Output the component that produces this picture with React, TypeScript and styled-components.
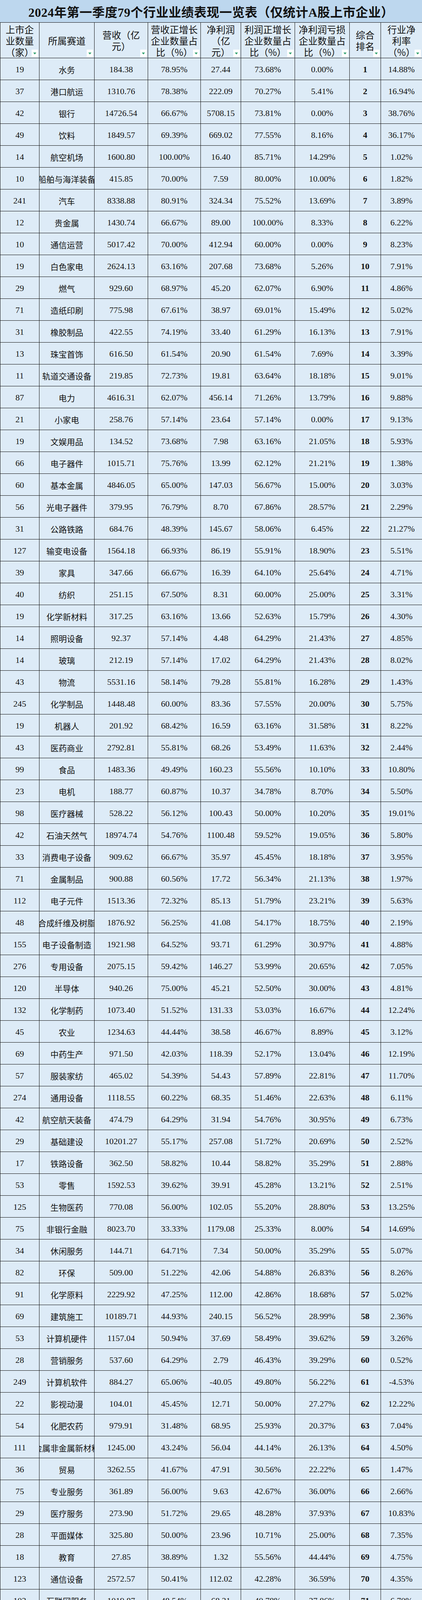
import React from "react";
import styled, { createGlobalStyle } from "styled-components";

const GlobalStyle = createGlobalStyle`
  html, body { margin: 0; padding: 0; background: #ffffff; overflow-x: hidden; }
  body { font-family: "Liberation Serif", "Noto Sans CJK SC", serif; }
  * { box-sizing: border-box; }
`;

const COLS = "101px 141px 137px 135px 103px 138px 140px 80px 105px";

const Page = styled.div`
  width: 1080px;
  height: 4574px;
  display: flex;
  flex-direction: column;
  overflow: hidden;
  background: #ddebf7;
`;

const TitleBar = styled.div`
  height: 57px;
  flex-shrink: 0;
  background: #bdd7ee;
  display: flex;
  align-items: center;
  justify-content: center;
  font-family: "Liberation Serif", "Noto Sans CJK SC", serif;
  font-size: 32px;
  font-weight: 700;
  color: #111;
  letter-spacing: 0.5px;
`;

const HeaderRow = styled.div`
  display: grid;
  grid-template-columns: ${COLS};
  flex-shrink: 0;
  height: 92px;
  border-top: 1.5px solid #111;
  border-bottom: 1.5px solid #111;
  background: #ddebf7;
`;

const HeaderCell = styled.div`
  position: relative;
  border-right: 1px solid #111;
  display: flex;
  flex-direction: column;
  align-items: center;
  justify-content: center;
  font-family: "Noto Sans CJK SC", sans-serif;
  font-size: 24px;
  line-height: 29px;
  color: #111;
  overflow: hidden;
  white-space: nowrap;
  &:first-child { border-left: 1px solid #111; }
  &:last-child { border-right: none; }
`;

const FilterButton = styled.span`
  position: absolute;
  right: 3px;
  bottom: 2px;
  width: 16px;
  height: 19px;
  background: #ffffff;
  display: flex;
  align-items: center;
  justify-content: center;
`;

const Row = styled.div`
  display: grid;
  grid-template-columns: ${COLS};
  flex-shrink: 0;
  height: 56px;
  border-bottom: 1px solid #111;
  background: #ddebf7;
`;

const Cell = styled.div<{ $bold?: boolean; $name?: boolean }>`
  border-right: 1px solid #111;
  display: flex;
  flex-direction: column;
  align-items: center;
  justify-content: center;
  overflow: hidden;
  white-space: nowrap;
  padding-top: 3px;
  color: #111;
  font-family: ${(p) =>
    p.$name
      ? `"Noto Sans CJK SC", sans-serif`
      : `"Liberation Serif", "Noto Sans CJK SC", serif`};
  font-size: ${(p) => (p.$name ? "21px" : "22px")};
  line-height: ${(p) => (p.$name ? "26px" : "24px")};
  font-weight: ${(p) => (p.$bold ? 700 : 400)};
  &:first-child { border-left: 1px solid #111; }
  &:last-child { border-right: none; }
`;

const NameLine = styled.span`
  display: block;
  flex-shrink: 0;
`;

type RowData = [number, string, string, string, string, string, string, number, string];

const DATA: RowData[] = [
  [19, "水务", "184.38", "78.95%", "27.44", "73.68%", "0.00%", 1, "14.88%"],
  [37, "港口航运", "1310.76", "78.38%", "222.09", "70.27%", "5.41%", 2, "16.94%"],
  [42, "银行", "14726.54", "66.67%", "5708.15", "73.81%", "0.00%", 3, "38.76%"],
  [49, "饮料", "1849.57", "69.39%", "669.02", "77.55%", "8.16%", 4, "36.17%"],
  [14, "航空机场", "1600.80", "100.00%", "16.40", "85.71%", "14.29%", 5, "1.02%"],
  [10, "船舶与海洋装备", "415.85", "70.00%", "7.59", "80.00%", "10.00%", 6, "1.82%"],
  [241, "汽车", "8338.88", "80.91%", "324.34", "75.52%", "13.69%", 7, "3.89%"],
  [12, "贵金属", "1430.74", "66.67%", "89.00", "100.00%", "8.33%", 8, "6.22%"],
  [10, "通信运营", "5017.42", "70.00%", "412.94", "60.00%", "0.00%", 9, "8.23%"],
  [19, "白色家电", "2624.13", "63.16%", "207.68", "73.68%", "5.26%", 10, "7.91%"],
  [29, "燃气", "929.60", "68.97%", "45.20", "62.07%", "6.90%", 11, "4.86%"],
  [71, "造纸印刷", "775.98", "67.61%", "38.97", "69.01%", "15.49%", 12, "5.02%"],
  [31, "橡胶制品", "422.55", "74.19%", "33.40", "61.29%", "16.13%", 13, "7.91%"],
  [13, "珠宝首饰", "616.50", "61.54%", "20.90", "61.54%", "7.69%", 14, "3.39%"],
  [11, "轨道交通设备", "219.85", "72.73%", "19.81", "63.64%", "18.18%", 15, "9.01%"],
  [87, "电力", "4616.31", "62.07%", "456.14", "71.26%", "13.79%", 16, "9.88%"],
  [21, "小家电", "258.76", "57.14%", "23.64", "57.14%", "0.00%", 17, "9.13%"],
  [19, "文娱用品", "134.52", "73.68%", "7.98", "63.16%", "21.05%", 18, "5.93%"],
  [66, "电子器件", "1015.71", "75.76%", "13.99", "62.12%", "21.21%", 19, "1.38%"],
  [60, "基本金属", "4846.05", "65.00%", "147.03", "56.67%", "15.00%", 20, "3.03%"],
  [56, "光电子器件", "379.95", "76.79%", "8.70", "67.86%", "28.57%", 21, "2.29%"],
  [31, "公路铁路", "684.76", "48.39%", "145.67", "58.06%", "6.45%", 22, "21.27%"],
  [127, "输变电设备", "1564.18", "66.93%", "86.19", "55.91%", "18.90%", 23, "5.51%"],
  [39, "家具", "347.66", "66.67%", "16.39", "64.10%", "25.64%", 24, "4.71%"],
  [40, "纺织", "251.15", "67.50%", "8.31", "60.00%", "25.00%", 25, "3.31%"],
  [19, "化学新材料", "317.25", "63.16%", "13.66", "52.63%", "15.79%", 26, "4.30%"],
  [14, "照明设备", "92.37", "57.14%", "4.48", "64.29%", "21.43%", 27, "4.85%"],
  [14, "玻璃", "212.19", "57.14%", "17.02", "64.29%", "21.43%", 28, "8.02%"],
  [43, "物流", "5531.16", "58.14%", "79.28", "55.81%", "16.28%", 29, "1.43%"],
  [245, "化学制品", "1448.48", "60.00%", "83.36", "57.55%", "20.00%", 30, "5.75%"],
  [19, "机器人", "201.92", "68.42%", "16.59", "63.16%", "31.58%", 31, "8.22%"],
  [43, "医药商业", "2792.81", "55.81%", "68.26", "53.49%", "11.63%", 32, "2.44%"],
  [99, "食品", "1483.36", "49.49%", "160.23", "55.56%", "10.10%", 33, "10.80%"],
  [23, "电机", "188.77", "60.87%", "10.37", "34.78%", "8.70%", 34, "5.50%"],
  [98, "医疗器械", "528.22", "56.12%", "100.43", "50.00%", "10.20%", 35, "19.01%"],
  [42, "石油天然气", "18974.74", "54.76%", "1100.48", "59.52%", "19.05%", 36, "5.80%"],
  [33, "消费电子设备", "909.62", "66.67%", "35.97", "45.45%", "18.18%", 37, "3.95%"],
  [71, "金属制品", "900.88", "60.56%", "17.72", "56.34%", "21.13%", 38, "1.97%"],
  [112, "电子元件", "1513.36", "72.32%", "85.13", "51.79%", "23.21%", 39, "5.63%"],
  [48, "合成纤维及树脂", "1876.92", "56.25%", "41.08", "54.17%", "18.75%", 40, "2.19%"],
  [155, "电子设备制造", "1921.98", "64.52%", "93.71", "61.29%", "30.97%", 41, "4.88%"],
  [276, "专用设备", "2075.15", "59.42%", "146.27", "53.99%", "20.65%", 42, "7.05%"],
  [120, "半导体", "940.26", "75.00%", "45.21", "52.50%", "30.00%", 43, "4.81%"],
  [132, "化学制药", "1073.40", "51.52%", "131.33", "53.03%", "16.67%", 44, "12.24%"],
  [45, "农业", "1234.63", "44.44%", "38.58", "46.67%", "8.89%", 45, "3.12%"],
  [69, "中药生产", "971.50", "42.03%", "118.39", "52.17%", "13.04%", 46, "12.19%"],
  [57, "服装家纺", "465.02", "54.39%", "54.43", "57.89%", "22.81%", 47, "11.70%"],
  [274, "通用设备", "1118.55", "60.22%", "68.35", "51.46%", "22.63%", 48, "6.11%"],
  [42, "航空航天装备", "474.79", "64.29%", "31.94", "54.76%", "30.95%", 49, "6.73%"],
  [29, "基础建设", "10201.27", "55.17%", "257.08", "51.72%", "20.69%", 50, "2.52%"],
  [17, "铁路设备", "362.50", "58.82%", "10.44", "58.82%", "35.29%", 51, "2.88%"],
  [53, "零售", "1592.53", "39.62%", "39.91", "45.28%", "13.21%", 52, "2.51%"],
  [125, "生物医药", "770.08", "56.00%", "102.05", "55.20%", "28.80%", 53, "13.25%"],
  [75, "非银行金融", "8023.70", "33.33%", "1179.08", "25.33%", "8.00%", 54, "14.69%"],
  [34, "休闲服务", "144.71", "64.71%", "7.34", "50.00%", "35.29%", 55, "5.07%"],
  [82, "环保", "509.00", "51.22%", "42.06", "54.88%", "26.83%", 56, "8.26%"],
  [91, "化学原料", "2229.92", "47.25%", "112.00", "42.86%", "18.68%", 57, "5.02%"],
  [69, "建筑施工", "10189.71", "44.93%", "240.15", "56.52%", "28.99%", 58, "2.36%"],
  [53, "计算机硬件", "1157.04", "50.94%", "37.69", "58.49%", "39.62%", 59, "3.26%"],
  [28, "营销服务", "537.60", "64.29%", "2.79", "46.43%", "39.29%", 60, "0.52%"],
  [249, "计算机软件", "884.27", "65.06%", "-40.05", "49.80%", "56.22%", 61, "-4.53%"],
  [22, "影视动漫", "104.01", "45.45%", "12.71", "50.00%", "27.27%", 62, "12.22%"],
  [54, "化肥农药", "979.91", "31.48%", "68.95", "25.93%", "20.37%", 63, "7.04%"],
  [111, "金属非金属新材料", "1245.00", "43.24%", "56.04", "44.14%", "26.13%", 64, "4.50%"],
  [36, "贸易", "3262.55", "41.67%", "47.91", "30.56%", "22.22%", 65, "1.47%"],
  [75, "专业服务", "361.89", "56.00%", "9.63", "42.67%", "36.00%", 66, "2.66%"],
  [29, "医疗服务", "273.90", "51.72%", "29.65", "48.28%", "37.93%", 67, "10.83%"],
  [28, "平面媒体", "325.80", "50.00%", "23.96", "10.71%", "25.00%", 68, "7.35%"],
  [18, "教育", "27.85", "38.89%", "1.32", "55.56%", "44.44%", 69, "4.75%"],
  [123, "通信设备", "2572.57", "50.41%", "112.02", "42.28%", "36.59%", 70, "4.35%"],
  [103, "互联网服务", "1019.87", "48.54%", "68.31", "40.78%", "37.86%", 71, "6.70%"],
  [68, "电源设备\n（光伏、锂", "2179.68", "44.12%", "37.67", "35.29%", "32.35%", 72, "1.73%"],
  [37, "煤炭", "3500.18", "16.22%", "411.21", "18.92%", "24.32%", 73, "11.75%"],
  [34, "稀有金属", "1228.59", "35.29%", "3.63", "29.41%", "32.35%", 74, "0.30%"],
  [51, "畜牧业", "1510.24", "31.37%", "-47.46", "47.06%", "52.94%", 75, "-3.14%"],
  [34, "钢铁", "4823.88", "32.35%", "-7.29", "35.29%", "41.18%", 76, "-0.15%"],
  [14, "广播电视", "98.15", "42.86%", "-1.06", "21.43%", "42.86%", 77, "-1.08%"],
  [95, "房地产开发", "3473.37", "33.68%", "-1.57", "27.37%", "53.68%", 78, "-0.05%"],
  [16, "水泥", "722.36", "12.50%", "-27.20", "18.75%", "62.50%", 79, "-3.77%"],
];

const HEADERS: string[][] = [
  ["上市企", "业数量", "（家）"],
  ["所属赛道"],
  ["营收（亿", "元）"],
  ["营收正增长", "企业数量占", "比（%）"],
  ["净利润", "（亿", "元）"],
  ["利润正增长", "企业数量占", "比（%）"],
  ["净利润亏损", "企业数量占", "比（%）"],
  ["综合", "排名"],
  ["行业净", "利率", "（%）"],
];

const FilterIcon: React.FC = () => (
  <FilterButton>
    <svg width="10" height="8" viewBox="0 0 10 8">
      <path d="M1 1.5 L9 1.5 L5 6.5 Z" fill="#2c9f6b" />
    </svg>
  </FilterButton>
);

export default function App() {
  return (
    <>
      <GlobalStyle />
      <Page>
        <TitleBar>2024年第一季度79个行业业绩表现一览表（仅统计A股上市企业）</TitleBar>
        <HeaderRow>
          {HEADERS.map((lines, i) => (
            <HeaderCell key={i}>
              {lines.map((l, j) => (
                <NameLine key={j}>{l}</NameLine>
              ))}
              <FilterIcon />
            </HeaderCell>
          ))}
        </HeaderRow>
        {DATA.map((r) => (
          <Row key={r[7]}>
            <Cell>{r[0]}</Cell>
            <Cell $name>
              {r[1].split("\n").map((l, j) => (
                <NameLine key={j}>{l}</NameLine>
              ))}
            </Cell>
            <Cell>{r[2]}</Cell>
            <Cell>{r[3]}</Cell>
            <Cell>{r[4]}</Cell>
            <Cell>{r[5]}</Cell>
            <Cell>{r[6]}</Cell>
            <Cell $bold>{r[7]}</Cell>
            <Cell>{r[8]}</Cell>
          </Row>
        ))}
      </Page>
    </>
  );
}
